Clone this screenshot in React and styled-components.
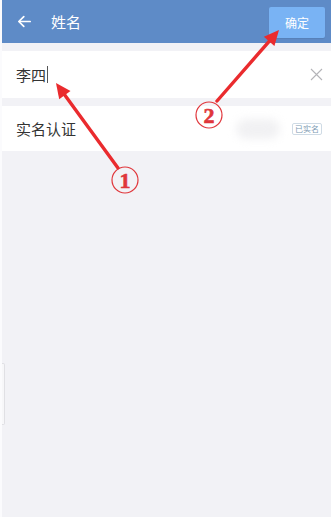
import styled, { createGlobalStyle } from "styled-components";

const Global = createGlobalStyle`
  html, body {
    margin: 0;
    padding: 0;
    background: #f2f2f6;
  }
  #root {
    min-height: 517px;
  }
`;

const Page = styled.div`
  position: relative;
  width: 331px;
  height: 517px;
  overflow: hidden;
  background: #f2f2f6;
  border-left: 2px solid #fbfbfd;
  box-sizing: border-box;
  font-family: "Noto Sans CJK SC", "Noto Sans", sans-serif;
`;

const Header = styled.div`
  height: 43px;
  background: #5e8bc7;
  display: flex;
  align-items: center;
  padding: 0 6px 0 14px;
  color: #fff;
`;

const Back = styled.svg`
  width: 17px;
  height: 17px;
  margin-right: 18px;
`;

const Title = styled.div`
  font-size: 15px;
  flex: 1;
`;

const OkButton = styled.div`
  width: 56px;
  height: 31px;
  margin-top: 1px;
  border-radius: 2px;
  background: #79b3f4;
  font-size: 12px;
  display: flex;
  align-items: center;
  justify-content: center;
  box-shadow: 0 1px 1px rgba(0, 0, 0, 0.08);
`;

const Row = styled.div`
  margin-top: ${(p) => p.gap}px;
  height: ${(p) => p.h}px;
  background: #fff;
  display: flex;
  align-items: center;
  padding: 0 8px 0 14px;
  font-size: 15px;
  color: #333;
`;

const Value = styled.div`
  flex: 1;
  display: flex;
  align-items: center;
`;

const Caret = styled.span`
  display: inline-block;
  width: 1px;
  height: 17px;
  background: #555;
  margin-left: 1px;
`;

const Label = styled.div`
  flex: 1;
`;

const Blur = styled.div`
  width: 44px;
  height: 20px;
  margin-right: 12px;
  border-radius: 10px;
  background: #f1f1f3;
  filter: blur(4px);
`;

const Badge = styled.div`
  font-size: 8px;
  color: #7d9bb3;
  border: 1px solid #cfdbe5;
  border-radius: 2px;
  padding: 0 2px;
  line-height: 10px;
  margin-right: 1px;
`;

const Handle = styled.div`
  position: absolute;
  left: 0;
  top: 363px;
  width: 2px;
  height: 60px;
  border: 1px solid #e0e0e4;
  border-left: none;
  border-radius: 0 2px 2px 0;
  background: #f7f7f9;
`;

const Marks = styled.svg`
  position: absolute;
  left: -2px;
  top: 0;
  pointer-events: none;
`;

const Num = styled.text`
  font-family: "Liberation Serif", "DejaVu Serif", serif;
  font-weight: 700;
  font-size: 22px;
  fill: #e0363b;
  stroke: #e0363b;
  stroke-width: 0.6px;
`;

function Arrow({ x1, y1, x2, y2 }) {
  const dx = x2 - x1;
  const dy = y2 - y1;
  const len = Math.hypot(dx, dy);
  const ux = dx / len;
  const uy = dy / len;
  const hl = 15;
  const hw = 7;
  const bx = x2 - ux * hl;
  const by = y2 - uy * hl;
  const pts = `${x2},${y2} ${bx - uy * hw},${by + ux * hw} ${bx + uy * hw},${by - ux * hw}`;
  return (
    <g>
      <line x1={x1} y1={y1} x2={bx + ux * 2} y2={by + uy * 2} stroke="#ea2b2e" strokeWidth="3.4" strokeLinecap="round" />
      <polygon points={pts} fill="#ea2b2e" />
    </g>
  );
}

function Circled({ cx, cy, n }) {
  return (
    <g>
      <circle cx={cx} cy={cy} r="13" fill="none" stroke="#e0363b" strokeWidth="1.2" />
      <Num x={cx} y={cy + 7.5} textAnchor="middle">{n}</Num>
    </g>
  );
}

export default function App() {
  return (
    <>
      <Global />
      <Page>
        <Header>
          <Back viewBox="0 0 24 24" fill="none" stroke="#fff" strokeWidth="2.4" strokeLinecap="round" strokeLinejoin="round">
            <path d="M20 12H5" />
            <path d="M11 5l-7 7 7 7" />
          </Back>
          <Title>姓名</Title>
          <OkButton>确定</OkButton>
        </Header>
        <Row gap={8} h={47}>
          <Value>
            李四
            <Caret />
          </Value>
          <svg width="13" height="13" viewBox="0 0 13 13" stroke="#b4b4b8" strokeWidth="1.1">
            <path d="M1 1l11 11M12 1L1 12" />
          </svg>
        </Row>
        <Row gap={8} h={45}>
          <Label>实名认证</Label>
          <Blur />
          <Badge>已实名</Badge>
        </Row>
        <Handle />
        <Marks width="331" height="517">
          <Arrow x1={118} y1={168} x2={56} y2={83} />
          <Circled cx={125} cy={180} n="1" />
          <Arrow x1={217} y1={101} x2={279} y2={30} />
          <Circled cx={209} cy={115} n="2" />
        </Marks>
      </Page>
    </>
  );
}
